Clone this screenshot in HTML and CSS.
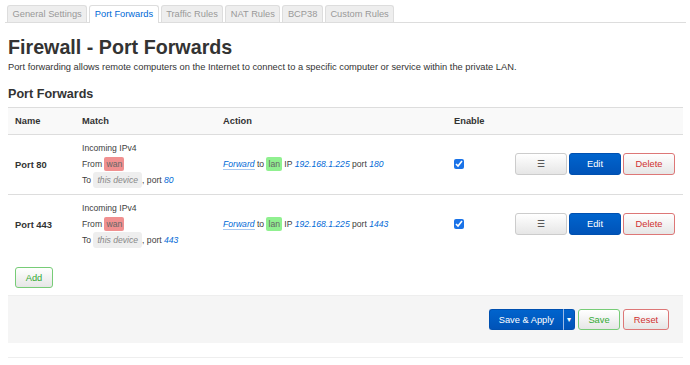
FILE: index.html
```html
<!DOCTYPE html>
<html>
<head>
    <title>Firewall - Port Forwards</title>
    <link rel="stylesheet" href="styles.css">
</head>
<body>
<div class="page">
    <ul class="tabs">
        <li><a href="#">General Settings</a></li>
        <li class="active"><a href="#">Port Forwards</a></li>
        <li><a href="#">Traffic Rules</a></li>
        <li><a href="#">NAT Rules</a></li>
        <li><a href="#">BCP38</a></li>
        <li><a href="#">Custom Rules</a></li>
    </ul>

    <h2>Firewall - Port Forwards</h2>
    <p class="desc">Port forwarding allows remote computers on the Internet to connect to a specific computer or service within the private LAN.</p>

    <h3>Port Forwards</h3>

    <table class="rules">
        <colgroup>
            <col class="c-name">
            <col class="c-match">
            <col class="c-action">
            <col class="c-enable">
            <col>
        </colgroup>
        <thead>
            <tr>
                <th>Name</th>
                <th>Match</th>
                <th>Action</th>
                <th>Enable</th>
                <th></th>
            </tr>
        </thead>
        <tbody>
            <tr>
                <td class="name">Port 80</td>
                <td class="match">
                    <div>Incoming IPv4</div>
                    <div>From <span class="zone wan">wan</span></div>
                    <div>To <span class="dev">this device</span>, port <var>80</var></div>
                </td>
                <td><span class="fwd">Forward</span> to <span class="zone lan">lan</span> IP <var>192.168.1.225</var> port <var>180</var></td>
                <td><input type="checkbox" checked></td>
                <td class="btns">
                    <button class="btn">&#9776;</button><button class="btn primary">Edit</button><button class="btn negative">Delete</button>
                </td>
            </tr>
            <tr>
                <td class="name">Port 443</td>
                <td class="match">
                    <div>Incoming IPv4</div>
                    <div>From <span class="zone wan">wan</span></div>
                    <div>To <span class="dev">this device</span>, port <var>443</var></div>
                </td>
                <td><span class="fwd">Forward</span> to <span class="zone lan">lan</span> IP <var>192.168.1.225</var> port <var>1443</var></td>
                <td><input type="checkbox" checked></td>
                <td class="btns">
                    <button class="btn">&#9776;</button><button class="btn primary">Edit</button><button class="btn negative">Delete</button>
                </td>
            </tr>
        </tbody>
    </table>

    <div class="add-row">
        <button class="btn add">Add</button>
    </div>

    <div class="page-actions">
        <div class="split">
            <button class="btn primary apply">Save &amp; Apply</button><button class="btn primary caret">&#9662;</button>
        </div>
        <button class="btn positive">Save</button>
        <button class="btn negative reset">Reset</button>
    </div>

    <hr class="foot">
</div>
</body>
</html>
```

FILE: styles.css
```css
body { margin: 0; font-family: "Liberation Sans", Arial, sans-serif; font-size: 9.3px; color: #404040; background: #fff; }
.page { width: 675px; margin-left: 8px; }

.tabs { display: flex; gap: 2px; list-style: none; margin: 5px -3px 0; padding: 0 0 0 2px; border-bottom: 1px solid #ddd; }
.tabs li a { display: block; padding: 3px 4.5px 2px; line-height: 11px; background: #eee; border: 1px solid #ddd; border-bottom: none; border-radius: 3px 3px 0 0; color: #999; text-decoration: none; }
.tabs li.active a { background: #fff; color: #0069d6; margin-bottom: -1px; padding-bottom: 3px; }

h2 { font-size: 19.7px; line-height: 24px; margin: 12px 0 0; color: #333; }
.desc { margin: 2px 0 0; line-height: 13px; color: #333; }
h3 { font-size: 12.6px; line-height: 16px; margin: 12px 0 0; color: #333; }

.rules { width: 100%; border-collapse: collapse; margin-top: 5px; table-layout: fixed; }
.rules col.c-name { width: 67px; }
.rules col.c-match { width: 141px; }
.rules col.c-action { width: 231px; }
.rules col.c-enable { width: 59px; }
.rules th { text-align: left; background: #f9f9f9; border-top: 1px solid #ddd; border-bottom: 1px solid #ddd; padding: 7px 7px; line-height: 12px; color: #333; }
.rules td { padding: 5px 7px 6px; vertical-align: middle; font-size: 8.6px; color: #404040; }
.rules tbody tr + tr td { border-top: 1px solid #ddd; }
.rules td.name { font-weight: bold; font-size: 9.4px; color: #333; }
.rules td.match div { line-height: 16px; }

var { font-style: italic; color: #0069d6; }
.fwd { font-style: italic; color: #0069d6; border-bottom: 1px solid #a8c8f0; }
.zone { display: inline-block; line-height: 14px; padding: 0 2px; border-radius: 2px; color: #666; }
.zone.wan { background: #f09090; }
.zone.lan { background: #90f090; }
.dev { display: inline-block; line-height: 16px; padding: 0 4px; border-radius: 3px; background: #eee; color: #888; font-style: italic; }

input[type=checkbox] { width: 10px; height: 10px; margin: 0; accent-color: #1a73e8; vertical-align: middle; }

.btn { font-family: inherit; font-size: 9.3px; height: 22px; border: 1px solid #ccc; border-radius: 3px; background: linear-gradient(#fff, #e6e6e6); color: #333; padding: 0 6px; cursor: pointer; }
.btn.primary { background: linear-gradient(#0064cd, #0053b8); border-color: #0050b0; color: #fff; }
.btn.negative { color: #d03030; border-color: #d77; }
.btn.positive { color: #3a3; border-color: #7c7; }
.rules td.btns { text-align: right; white-space: nowrap; padding-right: 9px; }
.btns .btn { width: 52px; margin-left: 2px; font-size: 9.3px; }

.add-row { padding: 13px 7px 7px; }
.btn.add { height: 21px; width: 38px; color: #3a3; border-color: #7c7; }

.page-actions { display: flex; justify-content: flex-end; align-items: center; gap: 3px; background: #f5f5f5; border-top: 1px solid #eee; padding: 13px 14px 13px; }
.page-actions .btn { height: 21px; }
.split { display: flex; }
.split .apply { border-radius: 3px 0 0 3px; padding: 0 9px; border-right: 1px solid #9bbbe6; }
.split .caret { border-radius: 0 3px 3px 0; border-left: none; padding: 0 3px; font-size: 8px; }
.page-actions .positive { width: 42px; }
.page-actions .reset { width: 46px; }

.foot { border: none; border-top: 1px solid #eee; margin: 14px 0 0; }
```
